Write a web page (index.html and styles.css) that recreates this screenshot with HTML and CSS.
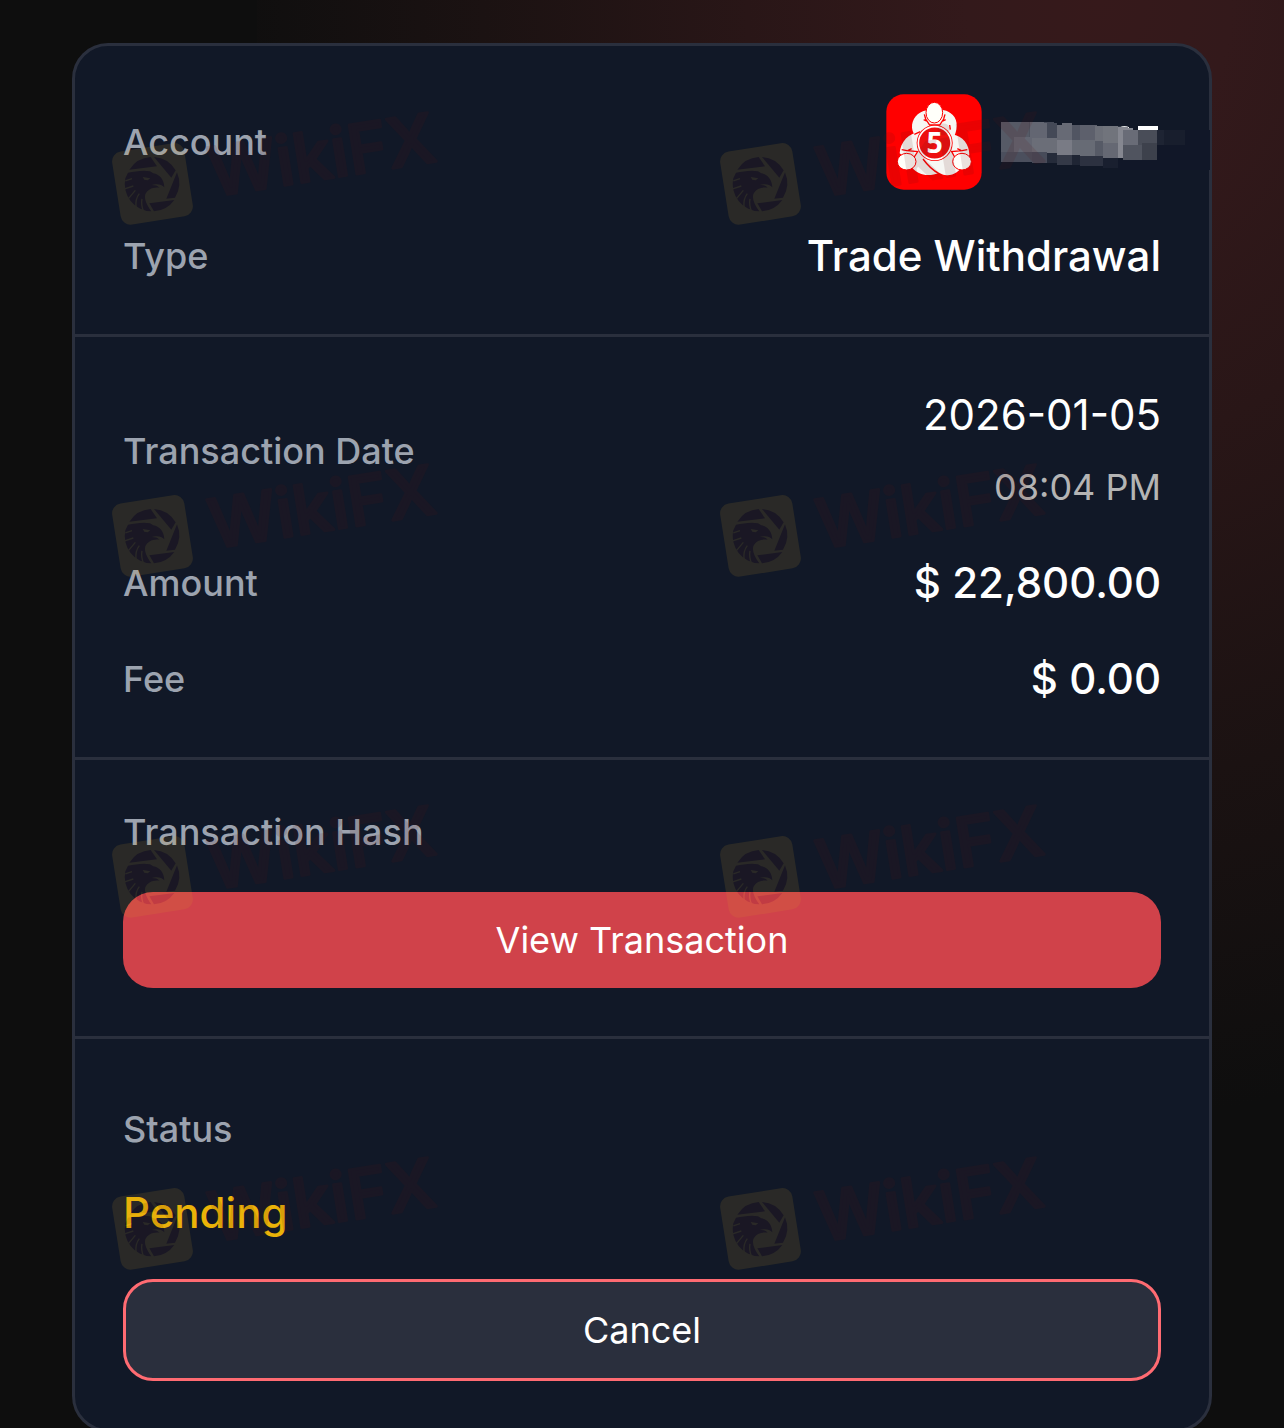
FILE: index.html
```html
<!DOCTYPE html>
<html lang="en">
<head>
    <meta charset="UTF-8">
    <meta name="viewport" content="width=device-width, initial-scale=1.0">
    <title>Transaction Details</title>
    <link rel="stylesheet" href="styles.css">
</head>
<body>
    <main class="card">
        <section class="section">
            <div class="row">
                <span class="label">Account</span>
                <div class="account">
                    <svg class="logo" viewBox="47 41 288 288" role="img" aria-label="MetaTrader 5">
                        <rect x="48" y="42" width="286" height="286" rx="52" fill="#ff0000"/>
                        <g fill="#f7f7f4">
                            <path d="M170 90C140 94 124 118 125 142C126 152 130 160 136 168H252C264 140 262 112 240 98C232 92 224 89 214 88Z"/>
                            <path d="M150 154C116 157 90 184 88 219L110 236L122 258C140 285 175 291 207 277L238 224L180 150Z"/>
                            <path d="M245 162C278 168 297 192 297 224L283 249C268 273 250 286 229 285C201 282 178 255 160 235L200 190L252 150Z"/>
                        </g>
                        <g fill="none" stroke="#ff0000" stroke-width="4">
                            <path d="M162 102L166 116L178 134H208L220 116L224 102M168 122L160 118M218 122L226 118"/>
                            <path d="M94 208L110 211L142 214L128 236M112 211L124 205"/>
                            <path d="M291 208L275 211L244 214L256 236M273 211L261 205"/>
                            <path d="M158 236C174 258 188 270 206 280M132 162L150 154M240 148L238 134"/>
                        </g>
                        <g fill="#fffffa" stroke="#ff0000" stroke-width="3">
                            <ellipse cx="192" cy="97" rx="25" ry="31"/>
                            <ellipse cx="109" cy="244" rx="28" ry="25"/>
                            <ellipse cx="275" cy="244" rx="28" ry="25"/>
                        </g>
                        <circle cx="193" cy="188" r="54" fill="#ff0000"/>
                        <circle cx="193" cy="188" r="49" fill="#ed1010" stroke="#fff" stroke-width="5"/>
                        <text class="logo-digit" x="193" y="217" text-anchor="middle">5</text>
                    </svg>
                    <!-- account number is hidden -->
                    <svg class="masked" viewBox="63 36 480 180" role="img" aria-label="Hidden account number">
                        <path fill="#fff" d="M420 82Q433 74 447 82V92H420ZM474 78H534V91H474Z"/>
                        <path fill="#111728" d="M530 90H690V210H414V180H530Z"/>
                        <path fill="#565a66" d="M63 66H148V111H102V156H63Z"/>
                        <path fill="#4b4f5d" d="M63 156H156V186H63Z"/>
                        <path fill="#636672" d="M102 111H156V156H102ZM148 66H201V114H156V111H148Z"/>
                        <path fill="#444957" d="M192 66H222V69H231V114H201V69H192Z"/>
                        <path fill="#6b6e78" d="M156 114H231V159H201V156H156Z"/>
                        <path fill="#474b59" d="M156 156H201V189H156Z"/>
                        <path fill="#252b3a" d="M201 159H231V189H201Z"/>
                        <path fill="#676a75" d="M246 69H276V75H276V120H231V75H246Z"/>
                        <path fill="#797b85" d="M231 120H276V165H231Z"/>
                        <path fill="#343947" d="M231 165H276V195H231Z"/>
                        <path fill="#515562" d="M276 75H300V120H276Z"/>
                        <path fill="#5d606c" d="M300 75H351V78H345V123H300Z"/>
                        <path fill="#676b75" d="M276 120H345V168H300V165H276Z"/>
                        <path fill="#1f2534" d="M276 165H300V195H276Z"/>
                        <path fill="#2c3140" d="M300 168H369V198H300Z"/>
                        <path fill="#6c6f78" d="M345 78H369V123H345Z"/>
                        <path fill="#565a66" d="M345 123H369V168H345Z"/>
                        <path fill="#71747c" d="M369 78H414V129H369Z"/>
                        <path fill="#656873" d="M369 129H414V174H369Z"/>
                        <path fill="#191f2f" d="M369 174H414V204H369Z"/>
                        <path fill="#858790" d="M414 80H444V84H459V90H429V174H414Z"/>
                        <path fill="#696c77" d="M429 90H474V135H429Z"/>
                        <path fill="#50545f" d="M429 135H486V180H429Z"/>
                        <path fill="#494d58" d="M474 90H531V135H474Z"/>
                        <path fill="#3d414c" d="M486 129H531V180H486Z"/>
                        <path fill="#1e2433" d="M531 90H552V135H531Z"/>
                        <path fill="#181e2d" d="M552 90H615V135H552Z"/>
                    </svg>
                </div>
            </div>
            <div class="row">
                <span class="label">Type</span>
                <span class="value">Trade Withdrawal</span>
            </div>
        </section>

        <section class="section">
            <div class="row">
                <span class="label">Transaction Date</span>
                <time class="date" datetime="2026-01-05T20:04">
                    <span class="day">2026-01-05</span>
                    <span class="time">08:04 PM</span>
                </time>
            </div>
            <div class="row">
                <span class="label">Amount</span>
                <span class="value">$ 22,800.00</span>
            </div>
            <div class="row">
                <span class="label">Fee</span>
                <span class="value">$ 0.00</span>
            </div>
        </section>

        <section class="section">
            <span class="label">Transaction Hash</span>
            <button class="btn btn-primary" type="button">View Transaction</button>
        </section>

        <section class="section">
            <div class="status">
                <span class="label">Status</span>
                <span class="value pending">Pending</span>
            </div>
            <button class="btn btn-outline" type="button">Cancel</button>
        </section>
    </main>

    <svg class="defs" aria-hidden="true">
        <symbol id="mark" viewBox="0 0 340 130">
            <g transform="rotate(-9 40 76)">
                <rect x="4" y="39" width="73" height="74" rx="10" fill="#daa627"/>
                <text class="wordmark" x="98" y="98">WikiFX</text>
            </g>
            <g transform="translate(-2 31) scale(.3333)">
                <!-- shutter blades -->
                <g fill="#5a1012">
                    <path d="M58 92A82 82 0 0 1 122 54L141 82Z"/>
                    <path d="M132 54A82 82 0 0 1 197 94L184 116Z"/>
                    <path d="M201 100A82 82 0 0 1 195 176L169 179Z"/>
                    <path d="M118 193L193 183A82 82 0 0 1 132 217Z"/>
                </g>
                <!-- eagle head -->
                <path fill="#5a1012" d="M54 101C75 98 98 92 120 97L130 103C148 106 162 120 163 145C156 138 148 135 136 136L125 138C136 138 143 140 149 146C128 143 112 152 106 166C102 180 110 198 124 217A82 82 0 0 1 46 118Z"/>
                <path fill="#daa627" d="M98 114L121 118L113 124L103 122Z"/>
                <path fill="none" stroke="#daa627" stroke-width="4" d="M46 126L66 119M44 150L70 141M56 178L76 154M78 206C76 186 80 174 88 164M100 216C94 200 94 190 96 180"/>
            </g>
        </symbol>
    </svg>
    <div class="watermarks" aria-hidden="true">
        <svg class="mark"><use href="#mark"/></svg>
        <svg class="mark"><use href="#mark"/></svg>
        <svg class="mark"><use href="#mark"/></svg>
        <svg class="mark"><use href="#mark"/></svg>
        <svg class="mark"><use href="#mark"/></svg>
        <svg class="mark"><use href="#mark"/></svg>
        <svg class="mark"><use href="#mark"/></svg>
        <svg class="mark"><use href="#mark"/></svg>
    </div>
</body>
</html>
```
FILE: styles.css
```css
* {
    box-sizing: border-box;
}
body {
    position: relative;
    margin: 0;
    padding: 43px 72px;
    min-height: 100vh;
    font-family: Inter, 'Liberation Sans', sans-serif;
    font-size: 36px;
    color: #fff;
    background: #0e0e0e radial-gradient(ellipse 880px 1120px at 82% 0, #36191b 0%, #33191b 15%, #291617 40%, #1b1212 70%, #0e0e0e 100%) no-repeat right top / 80% 1200px;
}
.card {
    background: #111827;
    border: 3px solid #2a2f3d;
    border-radius: 36px;
}
.section {
    display: flex;
    flex-direction: column;
    gap: 36px;
    padding: 48px;
}
.section + .section {
    border-top: 3px solid #2a2f3d;
}
.row {
    display: flex;
    justify-content: space-between;
    align-items: center;
}
.label {
    line-height: 48px;
    font-weight: 500;
    color: #9ca3af;
}
.value {
    font-size: 42px;
    line-height: 60px;
    font-weight: 500;
}
.account {
    display: flex;
    align-items: center;
    gap: 19px;
}
.logo {
    width: 96px;
    height: 96px;
}
.logo-digit {
    font-family: 'Open Sans', sans-serif;
    font-size: 86px;
    font-weight: 700;
    fill: #fff;
}
.masked {
    width: 160px;
    height: 60px;
    overflow: visible;
}
.date {
    display: flex;
    flex-direction: column;
    gap: 12px;
    text-align: right;
    line-height: 60px;
}
.day {
    font-size: 42px;
}
.time {
    color: #b4b4b4;
}
.status {
    display: flex;
    flex-direction: column;
    gap: 24px;
    padding-top: 12px;
}
.status .label {
    line-height: 60px;
}
.pending {
    color: #eab308;
}
.btn {
    width: 100%;
    padding: 24px;
    border: none;
    border-radius: 30px;
    font-family: inherit;
    font-size: 36px;
    line-height: 48px;
    color: #fff;
    cursor: pointer;
}
.btn-primary {
    background: #d0424a;
}
.btn-outline {
    background: #2a2f3d;
    border: 3px solid #ff6b72;
}
.defs {
    position: absolute;
    width: 0;
    height: 0;
}
.watermarks {
    position: absolute;
    top: 108px;
    left: 112px;
    display: grid;
    grid-template-columns: 608px 340px;
    grid-template-rows: 352px 341px 352px 130px;
    opacity: 0.12;
    pointer-events: none;
}
.mark {
    width: 340px;
    height: 130px;
}
.wordmark {
    font-family: Inter, sans-serif;
    font-size: 68px;
    font-weight: 500;
    fill: #5a1012;
    stroke: #5a1012;
    stroke-width: 3;
    stroke-linejoin: round;
}
```
